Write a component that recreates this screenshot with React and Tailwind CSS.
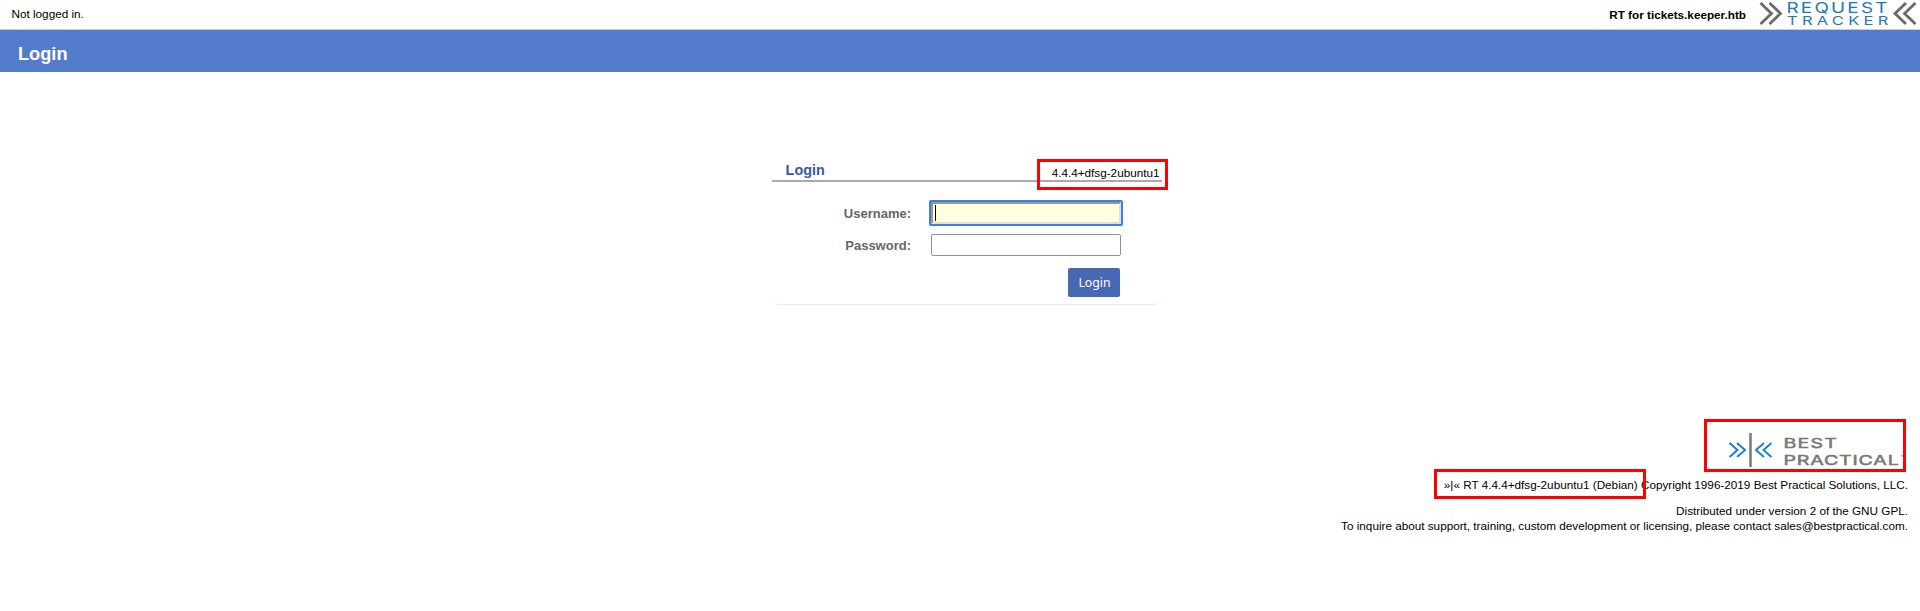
function RequestTrackerLogo() {
  return (
    <svg className="block h-[29px] w-[165px]" viewBox="1755 0 165 29" fill="none">
      <g stroke="#6a6a6a" strokeWidth="2.8">
        <path d="M1760.500 3L1771.500 13.5L1760.500 24M1769.500 3L1780.500 13.5L1769.500 24" />
        <path d="M1906 3L1895 13.5L1906 24M1915.500 3L1904.500 13.5L1915.500 24" />
      </g>
      <g fill="#1f7aad" fontFamily="Inter, sans-serif">
        <text transform="translate(1786.500 13.200) scale(1.35 1)" fontSize="14" textLength="74.800" lengthAdjust="spacing">REQUEST</text>
        <text transform="translate(1787 25) scale(1.35 1)" fontSize="12.200" textLength="75" lengthAdjust="spacing">TRACKER</text>
      </g>
    </svg>
  );
}

function BestPracticalLogo() {
  return (
    <svg className="block h-[40px] w-[190px]" viewBox="1718 430 190 40" fill="none">
      <g stroke="#1c80cf" strokeWidth="2">
        <path d="M1729.500 443L1737.500 450L1729.500 457M1737 443L1745 450L1737 457" />
        <path d="M1764 443L1756 450L1764 457M1771.500 443L1763.500 450L1771.500 457" />
      </g>
      <path d="M1750.500 433V467" stroke="#7b7777" strokeWidth="2.500" />
      <g fill="#7b7777" stroke="#7b7777" strokeWidth=".5" fontFamily="Inter, sans-serif">
        <text transform="translate(1783.500 448) scale(1.45 1)" fontSize="13.500" textLength="36.800" lengthAdjust="spacing">BEST</text>
        <text transform="translate(1783.500 465) scale(1.45 1)" fontSize="13.500" textLength="79.500" lengthAdjust="spacing">PRACTICAL</text>
        <text x="1900" y="461" fontSize="8" stroke="none">™</text>
      </g>
    </svg>
  );
}

export default function App() {
  return (
    <div className="relative h-[611px] w-full overflow-hidden bg-white font-['Liberation_Sans',Arial,sans-serif] text-[11.72px] leading-[15px] text-black">
      <header className="flex h-[30px] items-start justify-between border-b border-[#ccc] pl-[11.5px]">
        <span className="pt-[6px]">Not logged in.</span>
        <div className="flex">
          <span className="mr-[9px] pt-[7px] font-bold">RT for tickets.keeper.htb</span>
          <RequestTrackerLogo />
        </div>
      </header>
      <div className="flex h-[42px] items-center bg-[#547ccc] pl-[18px]">
        <h1 className="pt-[5px] text-[18.2px] leading-6 font-bold text-white">Login</h1>
      </div>

      <main className="ml-[772px] mt-[82px] h-[151px] w-[390px] rounded-b-[8px] border-b border-[#eee]">
        <div className="flex h-[28px] items-end justify-between border-b-2 border-[#aaa] pr-[2.5px] pl-[13.6px]">
          <h2 className="pb-[2px] text-[14.4px] leading-4 font-bold text-[#3858a3]">Login</h2>
          <span>4.4.4+dfsg-2ubuntu1</span>
        </div>
        <form className="flex flex-col pt-[18px]" onSubmit={(e) => e.preventDefault()}>
          <label className="flex h-[26px] items-center text-[13px] font-bold text-[#666]">
            <span className="w-[139px] text-right">Username:</span>
            <span className="ml-[18px] flex h-[26px] w-[194px] rounded-[2px] border-2 border-[#3584e4]">
              <span className="flex w-full items-center border-2 border-t-[#9c978c] border-r-[#e3e0dc] border-b-[#e3e0dc] border-l-[#9c978c] bg-[#ffffdd] pl-[2px]">
                <span className="h-4 w-px bg-black" />
              </span>
            </span>
          </label>
          <label className="mt-[8px] flex h-[22px] items-center text-[13px] font-bold text-[#666]">
            <span className="w-[139px] text-right">Password:</span>
            <input type="password" className="ml-[20px] h-[22px] w-[190px] rounded-[2px] border border-[#8f8f9d] bg-white" />
          </label>
          <button className="mt-[12px] mr-[42px] h-[29px] w-[52px] self-end rounded-[2px] bg-[#4868b3] font-['Noto_Sans',sans-serif] text-[13.33px] text-white">
            <span className="inline-block scale-x-[0.92]">Login</span>
          </button>
        </form>
      </main>

      <footer className="mt-[125px] flex flex-col items-end pr-[12px]">
        <BestPracticalLogo />
        <p className="mt-[7px]">»|« RT 4.4.4+dfsg-2ubuntu1 (Debian) Copyright 1996-2019 Best Practical Solutions, LLC.</p>
        <p className="mt-[11px]">Distributed under version 2 of the GNU GPL.</p>
        <p>To inquire about support, training, custom development or licensing, please contact sales@bestpractical.com.</p>
      </footer>

      <div className="absolute top-[159px] left-[1037px] h-[31px] w-[131px] border-3 border-[#ff0000]" />
      <div className="absolute top-[419px] left-[1704px] h-[53px] w-[202px] border-3 border-[#ff0000]" />
      <div className="absolute top-[469px] left-[1434px] h-[30px] w-[212px] border-3 border-[#ff0000]" />
    </div>
  );
}
